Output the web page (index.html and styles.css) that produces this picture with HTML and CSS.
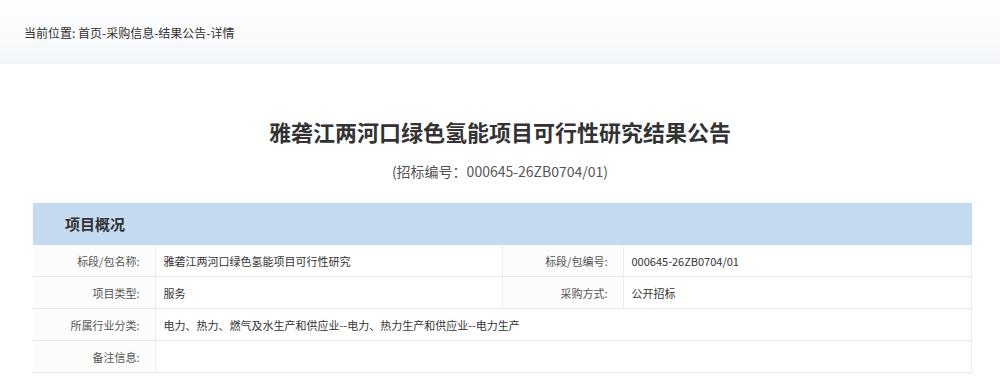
FILE: index.html
```html
<!DOCTYPE html>
<html>
<head>
    <title>结果公告详情</title>
    <link rel="stylesheet" href="styles.css">
</head>
<body>
    <div class="crumb-bar">
        <div class="crumb">当前位置: 首页-采购信息-结果公告-详情</div>
    </div>

    <h1 class="title">雅砻江两河口绿色氢能项目可行性研究结果公告</h1>
    <p class="code">(招标编号：000645-26ZB0704/01)</p>

    <div class="panel">
        <div class="panel-head">项目概况</div>
        <table class="info">
            <colgroup>
                <col class="c-label">
                <col class="c-value">
                <col class="c-label2">
                <col>
            </colgroup>
            <tr>
                <td class="label">标段/包名称:</td>
                <td>雅砻江两河口绿色氢能项目可行性研究</td>
                <td class="label">标段/包编号:</td>
                <td>000645-26ZB0704/01</td>
            </tr>
            <tr>
                <td class="label">项目类型:</td>
                <td>服务</td>
                <td class="label">采购方式:</td>
                <td>公开招标</td>
            </tr>
            <tr>
                <td class="label">所属行业分类:</td>
                <td colspan="3">电力、热力、燃气及水生产和供应业--电力、热力生产和供应业--电力生产</td>
            </tr>
            <tr>
                <td class="label">备注信息:</td>
                <td colspan="3"></td>
            </tr>
        </table>
    </div>
</body>
</html>
```

FILE: styles.css
```css
body {
    font-family: "Microsoft YaHei", "Noto Sans CJK SC", "Noto Sans", sans-serif;
    margin: 0;
    padding: 0;
    background-color: #fff;
    color: #333;
}

.crumb-bar {
    height: 64px;
    background: linear-gradient(to bottom, #ffffff, #f3f6f9);
    display: flex;
    align-items: center;
    padding-left: 24px;
}

.crumb {
    font-size: 12px;
    color: #333;
}

.title {
    margin: 53px 0 0;
    text-align: center;
    font-size: 22px;
    line-height: 28px;
    font-weight: bold;
    color: #333;
}

.code {
    margin: 16px 0 0;
    text-align: center;
    font-size: 14px;
    line-height: 20px;
    color: #555;
}

.panel {
    margin: 22px 28px 0 33px;
    width: 939px;
}

.panel-head {
    height: 42px;
    line-height: 42px;
    background-color: #c3daf1;
    padding-left: 32px;
    font-size: 15px;
    font-weight: bold;
    color: #333;
}

.info {
    width: 100%;
    border-collapse: collapse;
    font-size: 11px;
    color: #333;
    border-right: 1px solid #ececec;
}

.info td {
    height: 31px;
    padding: 0 8px;
    border-bottom: 1px solid #e8e8e8;
    border-left: 1px solid #eeeeee;
}

.info td:first-child {
    border-left: none;
}

.info .label {
    text-align: right;
    padding-right: 15px;
    color: #555;
    background-color: #fcfcfc;
}

.c-label {
    width: 122px;
}

.c-value {
    width: 347px;
}

.c-label2 {
    width: 121px;
}
```
